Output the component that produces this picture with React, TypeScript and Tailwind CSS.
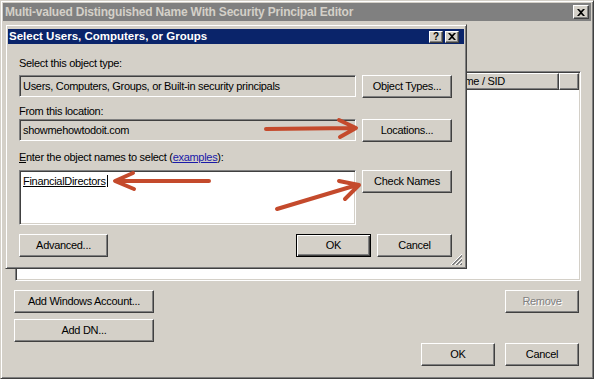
const raised =
  "border border-t-white border-l-white border-r-[#404040] border-b-[#404040] shadow-[inset_-1px_-1px_0_#808080]";
const sunken =
  "border border-t-[#808080] border-l-[#808080] border-r-white border-b-white shadow-[inset_1px_1px_0_#404040,inset_-1px_-1px_0_#d4d0c8]";
const frame =
  "border border-t-[#d4d0c8] border-l-[#d4d0c8] border-r-[#404040] border-b-[#404040] shadow-[inset_1px_1px_0_#fff,inset_-1px_-1px_0_#808080]";

function Btn({
  label,
  className = "",
  disabled = false,
  isDefault = false,
}: {
  label: string;
  className?: string;
  disabled?: boolean;
  isDefault?: boolean;
}) {
  const bevel = isDefault
    ? "border border-black shadow-[inset_1px_1px_0_#fff,inset_-1px_-1px_0_#404040,inset_-2px_-2px_0_#808080]"
    : raised;
  return (
    <div
      className={`flex items-center justify-center bg-[#d4d0c8] ${bevel} ${
        disabled ? "text-[#808080] [text-shadow:1px_1px_0_#fff]" : "text-black"
      } ${className}`}
    >
      {label}
    </div>
  );
}

function CloseGlyph() {
  return (
    <svg width="8" height="7" viewBox="0 0 8 7">
      <path d="M0 0h2l2 2 2-2h2L5 3.5 8 7H6L4 5 2 7H0l3-3.5z" fill="#000" />
    </svg>
  );
}

function Grip() {
  return (
    <svg width="12" height="12" viewBox="0 0 12 12" className="absolute right-[3px] bottom-[2px]">
      <path d="M11 1 1 11M11 5 5 11M11 9 9 11" stroke="#808080" strokeWidth="1" />
      <path d="M11 2 2 11M11 6 6 11M11 10 10 11" stroke="#808080" strokeWidth="1" />
      <path d="M11 0 0 11M11 4 4 11M11 8 8 11" stroke="#fff" strokeWidth="1" />
    </svg>
  );
}

function SelectDialog() {
  return (
    <div
      className={`absolute left-[4px] top-[23px] w-[462px] h-[245px] bg-[#d4d0c8] pt-[4px] px-[2px] ${frame}`}
    >
      <div className="flex items-center justify-between h-[15px] bg-[#0a246a] pl-[1px] pr-[5px] text-white font-bold text-[11.5px] tracking-[0px]">
        <span>Select Users, Computers, or Groups</span>
        <div className="flex gap-[2px]">
          <div className={`w-[14px] h-[12px] bg-[#d4d0c8] flex items-center justify-center text-black text-[10px] font-bold leading-none ${raised}`}>
            ?
          </div>
          <div className={`w-[14px] h-[12px] bg-[#d4d0c8] flex items-center justify-center ${raised}`}>
            <CloseGlyph />
          </div>
        </div>
      </div>

      <div className="pl-[11px] flex flex-col">
        <div className="mt-[13px] h-[13px] leading-[13px]">Select this object type:</div>
        <div className="mt-[5px] flex gap-[6px]">
          <div className={`w-[337px] h-[22px] flex items-center pl-[3px] bg-[#d4d0c8] ${sunken}`}>
            Users, Computers, Groups, or Built-in security principals
          </div>
          <Btn label="Object Types..." className="w-[90px] h-[23px]" />
        </div>

        <div className="mt-[7px] h-[13px] leading-[13px]">From this location:</div>
        <div className="mt-[1px] flex gap-[6px]">
          <div className={`w-[337px] h-[22px] flex items-center pl-[3px] bg-[#d4d0c8] ${sunken}`}>
            showmehowtodoit.com
          </div>
          <Btn label="Locations..." className="w-[90px] h-[23px]" />
        </div>

        <div className="mt-[9px] h-[13px] leading-[13px]">
          <span className="underline">E</span>nter the object names to select (
          <span className="text-[#1a1aa8] underline">examples</span>):
        </div>
        <div className="mt-[6px] flex gap-[6px] items-start">
          <div className={`w-[337px] h-[55px] bg-white pl-[3px] pt-[2px] ${sunken}`}>
            <span className="underline border-r border-black pr-[1px]">FinancialDirectors</span>
          </div>
          <Btn label="Check Names" className="w-[90px] h-[23px]" />
        </div>

        <div className="mt-[9px] flex items-center">
          <Btn label="Advanced..." className="w-[89px] h-[23px]" />
          <Btn label="OK" isDefault className="ml-[188px] w-[75px] h-[23px]" />
          <Btn label="Cancel" className="ml-[6px] w-[75px] h-[23px]" />
        </div>
      </div>
      <Grip />
    </div>
  );
}

function Arrows() {
  return (
    <svg
      width="594"
      height="379"
      className="absolute inset-0 pointer-events-none"
      fill="none"
      stroke="#c44a2c"
      strokeWidth="4"
      strokeLinecap="round"
      strokeLinejoin="round"
    >
      <path d="M265 128 L352 127 M338 119 L355 127 L339 136" />
      <path d="M208 180 L116 180 M132 172 L114 180 L133 188" />
      <path d="M276 208 L356 184 M338 180 L358 184 L344 198" />
    </svg>
  );
}

export default function App() {
  return (
    <div className="font-['Liberation_Sans',Arial,sans-serif] text-[11px] tracking-[-0.3px] text-black">
      <div className={`relative w-[594px] h-[379px] bg-[#d4d0c8] p-[2px] flex flex-col ${frame}`}>
        <div className="flex items-center justify-between h-[18px] bg-[#808080] pl-[2px] pr-[2px] text-[#d4d0c8] font-bold text-[12px] tracking-[-0.2px]">
          <span>Multi-valued Distinguished Name With Security Principal Editor</span>
          <div className={`w-[16px] h-[14px] bg-[#d4d0c8] flex items-center justify-center ${raised}`}>
            <CloseGlyph />
          </div>
        </div>

        <div className="flex flex-col pl-[11px] pr-[10px]">
          <div className={`mt-[50px] ml-[1px] h-[210px] flex flex-col bg-white ${sunken} p-[1px]`}>
            <div className="flex h-[17px] bg-[#d4d0c8]">
              <div className={`w-[430px] ${raised}`} />
              <div className={`w-[112px] pl-[3px] flex items-center ${raised}`}>Name / SID</div>
              <div className={`flex-1 ${raised}`} />
            </div>
            <div className="flex-1 bg-white" />
          </div>

          <div className="mt-[9px] flex justify-between">
            <div className="flex flex-col gap-[6px]">
              <Btn label="Add Windows Account..." className="w-[140px] h-[23px]" />
              <Btn label="Add DN..." className="w-[140px] h-[23px]" />
            </div>
            <Btn label="Remove" disabled className="w-[74px] h-[23px] mr-[2px]" />
          </div>

          <div className="mt-px flex justify-end gap-[10px] mr-[2px]">
            <Btn label="OK" className="w-[74px] h-[23px]" />
            <Btn label="Cancel" className="w-[74px] h-[23px]" />
          </div>
        </div>

        <SelectDialog />
        <Arrows />
      </div>
    </div>
  );
}
